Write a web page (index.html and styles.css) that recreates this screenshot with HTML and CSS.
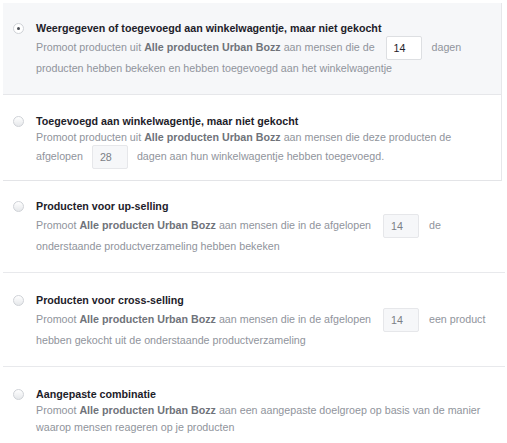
FILE: index.html
```html
<!DOCTYPE html>
<html lang="nl">
<head>
<meta charset="utf-8">
<title>Doelgroep opties</title>
<link rel="stylesheet" href="styles.css">
</head>
<body>
<div class="panel">
  <div class="card">
    <div class="opt selected">
      <span class="radio on"></span>
      <div class="body">
        <div class="title">Weergegeven of toegevoegd aan winkelwagentje, maar niet gekocht</div>
        <div class="desc">Promoot producten uit <b>Alle producten Urban Bozz</b> aan mensen die de <span class="num active">14</span> dagen producten hebben bekeken en hebben toegevoegd aan het winkelwagentje</div>
      </div>
    </div>
    <div class="opt compact">
      <span class="radio"></span>
      <div class="body">
        <div class="title">Toegevoegd aan winkelwagentje, maar niet gekocht</div>
        <div class="desc">Promoot producten uit <b>Alle producten Urban Bozz</b> aan mensen die deze producten de afgelopen <span class="num">28</span> dagen aan hun winkelwagentje hebben toegevoegd.</div>
      </div>
    </div>
  </div>
  <div class="opt">
    <span class="radio"></span>
    <div class="body">
      <div class="title">Producten voor up-selling</div>
      <div class="desc">Promoot <b>Alle producten Urban Bozz</b> aan mensen die in de afgelopen <span class="num wide">14</span> de onderstaande productverzameling hebben bekeken</div>
    </div>
  </div>
  <div class="opt sep">
    <span class="radio"></span>
    <div class="body">
      <div class="title">Producten voor cross-selling</div>
      <div class="desc">Promoot <b>Alle producten Urban Bozz</b> aan mensen die in de afgelopen <span class="num wide">14</span> een product hebben gekocht uit de onderstaande productverzameling</div>
    </div>
  </div>
  <div class="opt sep">
    <span class="radio"></span>
    <div class="body">
      <div class="title">Aangepaste combinatie</div>
      <div class="desc plain">Promoot <b>Alle producten Urban Bozz</b> aan een aangepaste doelgroep op basis van de manier waarop mensen reageren op je producten</div>
    </div>
  </div>
</div>
</body>
</html>
```
FILE: styles.css
```css
html, body {
  margin: 0;
  padding: 0;
  background: #fff;
}
body {
  font-family: "Liberation Sans", Arial, Helvetica, sans-serif;
  font-size: 10.7px;
  color: #1d2129;
}
.panel {
  padding: 3px 2px 0 3px;
}
.card {
  width: 499px;
  border-right: 1px solid #e6e7ea;
  border-bottom: 1px solid #e3e4e7;
  box-sizing: border-box;
}
.opt {
  display: flex;
  align-items: flex-start;
  gap: 12px;
  padding: 18px 10px 18px 10px;
}
.opt.selected {
  background: #f6f7f9;
  border-bottom: 1px solid #e6e7ea;
}
.opt.compact {
  padding-top: 19px;
  padding-bottom: 11px;
}
.opt.sep {
  border-top: 1px solid #e8e9ec;
  padding-top: 20px;
}
.radio {
  flex: none;
  width: 11px;
  height: 11px;
  margin-top: 2px;
  border: 1px solid #cfd2d7;
  border-radius: 50%;
  background: linear-gradient(#ffffff, #e6e8eb);
  box-sizing: border-box;
  position: relative;
}
.radio.on {
  background: #fff;
}
.radio.on::after {
  content: "";
  position: absolute;
  left: 3px;
  top: 3px;
  width: 3px;
  height: 3px;
  border-radius: 50%;
  background: #4b4f56;
}
.body {
  flex: 1;
  min-width: 0;
  padding-right: 4px;
}
.title {
  font-weight: bold;
  line-height: 15px;
  color: #1d2129;
}
.desc {
  line-height: 16px;
  color: #90949c;
}
.desc.plain {
  line-height: 17px;
}
.desc b {
  color: #6f737a;
}
.num {
  display: inline-block;
  box-sizing: border-box;
  width: 36px;
  height: 24px;
  line-height: 22px;
  padding-left: 7px;
  margin: 0 6px 0 6px;
  vertical-align: middle;
  border: 1px solid #e6e7ea;
  background: #f6f7f9;
  color: #7b7f86;
  border-radius: 2px;
}
.num.wide {
  margin: 0 7px 0 9px;
}
.num.active {
  background: #fff;
  border-color: #dddfe2;
  color: #1d2129;
  margin: 0 7px 0 8px;
}
```
